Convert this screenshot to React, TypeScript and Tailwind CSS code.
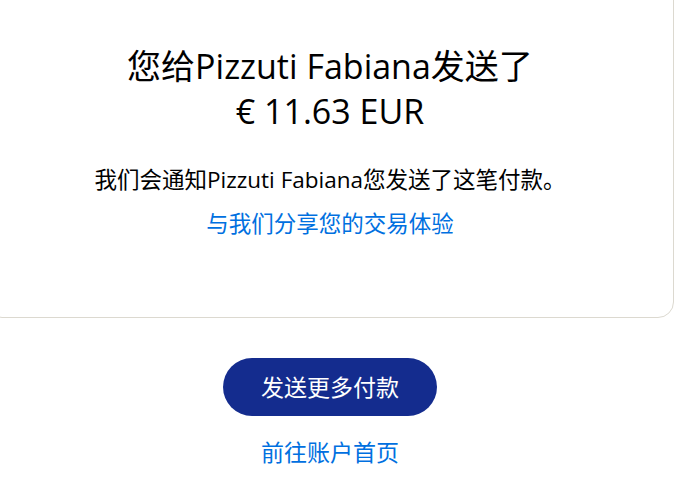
export default function App() {
  return (
    <div
      className="h-[498px] w-[693px] overflow-hidden bg-white"
      style={{ fontFamily: '"Open Sans", "Noto Sans CJK SC", sans-serif' }}
    >
      {/* Confirmation card */}
      <div className="-mt-[20px] -ml-[14px] w-[688px] rounded-2xl border border-[#dcd9d0] bg-white pt-[63px] pb-[77px] text-center">
        <h1 className="text-[34px] leading-[45px] font-normal text-black">
          您给Pizzuti Fabiana发送了
          <br />€ 11.63 EUR
        </h1>
        <p className="mt-[30px] text-[22.5px] leading-[32px] text-black">
          我们会通知Pizzuti Fabiana您发送了这笔付款。
        </p>
        <a href="#" className="mt-[12px] block text-[22.5px] leading-[32px] text-[#0070e0]">
          与我们分享您的交易体验
        </a>
      </div>

      <div className="flex flex-col items-center pr-[33px]">
        <button className="mt-[40px] h-[58px] w-[214px] rounded-full bg-[#142c8e] text-[23px] text-white">
          发送更多付款
        </button>
        <a href="#" className="mt-[20px] text-[23px] leading-[32px] text-[#0070e0]">
          前往账户首页
        </a>
      </div>
    </div>
  );
}
